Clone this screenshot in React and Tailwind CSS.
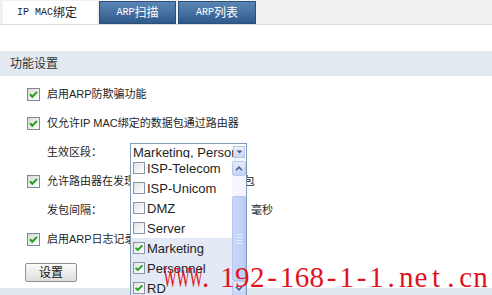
import React from "react";

const CB = ({ checked = true }) => (
  <svg width="13" height="13" viewBox="0 0 13 13" className="shrink-0 block">
    <defs>
      <linearGradient id="cbg" x1="0" y1="0" x2="1" y2="1">
        <stop offset="0" stopColor="#d8d8d2" />
        <stop offset="1" stopColor="#ffffff" />
      </linearGradient>
    </defs>
    <rect x="0.5" y="0.5" width="12" height="12" fill="url(#cbg)" stroke="#7c8a98" />
    {checked && (
      <path d="M3 6.3 L5.3 8.7 L10 3.9" fill="none" stroke="#21a121" strokeWidth="2" />
    )}
  </svg>
);

const SmallCB = ({ checked }) => (
  <svg width="12" height="12" viewBox="0 0 12 12" className="shrink-0 block">
    <defs>
      <linearGradient id="scbg" x1="0" y1="0" x2="1" y2="1">
        <stop offset="0" stopColor="#dfe2e6" />
        <stop offset="1" stopColor="#ffffff" />
      </linearGradient>
    </defs>
    <rect x="0.5" y="0.5" width="11" height="11" fill="url(#scbg)" stroke="#8796ab" />
    {checked && (
      <path d="M2.6 5.8 L4.8 8 L9.4 3.4" fill="none" stroke="#21a121" strokeWidth="1.9" />
    )}
  </svg>
);

const items = [
  ["ISP-Telecom", false],
  ["ISP-Unicom", false],
  ["DMZ", false],
  ["Server", false],
  ["Marketing", true],
  ["Personnel", true],
  ["RD", true],
];

const wm = [
  ["W", "w-[13px] scale-x-[0.5]"],
  ["W", "w-[13px] scale-x-[0.5]"],
  ["W", "w-[13px] scale-x-[0.5]"],
  [".", "w-[13px]"],
  ["\u00a0", "w-[8px]"],
  ..."192-168-1-1.net.cn".split("").map((c) => [c, "w-[14.9px]"]),
];

export default function App() {
  return (
    <div className="relative w-[492px] h-[295px] overflow-hidden bg-white text-[#1e1e1e] font-['Liberation_Sans','Noto_Sans_CJK_SC',sans-serif]">
      {/* tabs */}
      <div className="h-[25px] bg-[#f1f1f1] border-b border-[#dcdcdc] flex items-end pl-[3px] gap-[2px]">
        <div className="w-[94px] h-[23px] bg-white flex items-center justify-center pr-[6px] text-[#222]">
          <span className="font-['Liberation_Mono',monospace] text-[10px] whitespace-pre">IP MAC</span>
          <span className="text-[12px] leading-none">绑定</span>
        </div>
        <div className="w-[77px] h-[23px] bg-gradient-to-b from-[#5b85b4] to-[#2f5b8c] border border-[#2a4f7a] flex items-center justify-center text-white">
          <span className="font-['Liberation_Mono',monospace] text-[10px]">ARP</span>
          <span className="text-[12px] leading-none">扫描</span>
        </div>
        <div className="w-[78px] h-[23px] bg-gradient-to-b from-[#5b85b4] to-[#2f5b8c] border border-[#2a4f7a] flex items-center justify-center text-white">
          <span className="font-['Liberation_Mono',monospace] text-[10px]">ARP</span>
          <span className="text-[12px] leading-none">列表</span>
        </div>
      </div>

      <div className="h-[26px]" />

      {/* section header */}
      <div className="h-[25px] bg-[#e2e9f1] pl-[10px] flex items-center text-[12px] text-[#333]">
        功能设置
      </div>

      {/* form */}
      <div className="pt-[4px] text-[11px]">
        <div className="h-[29px] flex items-center pl-[27px] gap-[7px]">
          <CB />
          <span>启用ARP防欺骗功能</span>
        </div>
        <div className="h-[29px] flex items-center pl-[27px] gap-[7px]">
          <CB />
          <span>仅允许IP MAC绑定的数据包通过路由器</span>
        </div>
        <div className="h-[29px] flex items-center pl-[47px]">
          <span className="w-[83px]">生效区段：</span>
          <div className="relative self-start mt-[5px] w-[117px] h-[18px] border border-[#7f9db9] bg-white flex items-center">
            <span className="flex-1 overflow-hidden whitespace-nowrap pl-[2px] text-[13px] leading-none">
              Marketing, Personnel, RD
            </span>
            <div className="w-[12px] h-[12px] mr-[1px] border border-[#b3c4e6] bg-gradient-to-b from-[#eef3fd] to-[#c6d5f3] flex items-center justify-center">
              <svg width="7" height="4" viewBox="0 0 7 4">
                <path d="M0.5 0.5 L6.5 0.5 L3.5 3.5 Z" fill="#4a5d80" />
              </svg>
            </div>

            {/* dropdown list */}
            <div className="absolute left-[-1px] top-[14px] w-[117px] h-[150px] bg-white border-l border-r border-[#7f9db9] flex z-10">
              <div className="flex-1 flex flex-col">
                {items.map(([name, sel]) => (
                  <div
                    key={name}
                    className={
                      sel
                        ? "h-[20px] flex items-center pl-[2px] gap-[2px] bg-[#e3eaf6] text-[13px]"
                        : "h-[20px] flex items-center pl-[2px] gap-[2px] text-[13px]"
                    }
                  >
                    <SmallCB checked={sel} />
                    <span className="leading-none">{name}</span>
                  </div>
                ))}
              </div>
              <div className="w-[14px] flex flex-col pt-[3px] bg-[#f4f6fb]">
                <div className="h-[15px] rounded-[2px] border border-[#b7c9ee] bg-gradient-to-b from-[#e6eefd] to-[#c4d4f7] flex items-center justify-center">
                  <svg width="8" height="5" viewBox="0 0 8 5">
                    <path d="M1 4.2 L4 1.2 L7 4.2" fill="none" stroke="#4d6185" strokeWidth="1.6" />
                  </svg>
                </div>
                <div className="h-[20px]" />
                <div className="h-[85px] rounded-[2px] border border-[#b5c7ef] bg-gradient-to-r from-[#c9d8fb] to-[#bccdf5] flex flex-col items-center justify-center gap-[2px]">
                  <div className="w-[6px] h-px bg-[#e4ecfd]" />
                  <div className="w-[6px] h-px bg-[#e4ecfd]" />
                  <div className="w-[6px] h-px bg-[#e4ecfd]" />
                  <div className="w-[6px] h-px bg-[#e4ecfd]" />
                </div>
                <div className="h-[15px] rounded-[2px] border border-[#b7c9ee] bg-gradient-to-b from-[#e6eefd] to-[#c4d4f7] flex items-center justify-center">
                  <svg width="8" height="5" viewBox="0 0 8 5">
                    <path d="M1 0.8 L4 3.8 L7 0.8" fill="none" stroke="#4d6185" strokeWidth="1.6" />
                  </svg>
                </div>
              </div>
            </div>
          </div>
        </div>
        <div className="h-[29px] flex items-center pl-[27px] gap-[7px] whitespace-nowrap">
          <CB />
          <span>允许路由器在发现ARP攻击时发送GARP包</span>
        </div>
        <div className="h-[29px] flex items-center pl-[47px]">
          <span className="w-[83px]">发包间隔：</span>
          <div className="w-[116px] h-[18px] border border-[#7f9db9]" />
          <span className="ml-[5px]">毫秒</span>
        </div>
        <div className="h-[29px] flex items-center pl-[27px] gap-[7px]">
          <CB />
          <span>启用ARP日志记录</span>
        </div>
        <div className="pl-[25px] pt-[9px]">
          <div className="w-[52px] h-[19px] border border-[#8e9193] rounded-[2px] bg-gradient-to-b from-[#fbfbfb] to-[#dedede] flex items-center justify-center text-[12px] text-[#111]">
            设置
          </div>
        </div>
        <div className="mt-[6px] h-[12px] bg-[#dfe6ee]" />
      </div>

      {/* watermark */}
      <div className="absolute left-[160px] top-[263px] z-20 flex text-[29px] leading-[29px] text-[#e0131c] font-['Liberation_Serif',serif] whitespace-nowrap">
        {wm.map(([c, cls], i) => (
          <span key={i} className={"inline-block text-center " + cls}>
            {c}
          </span>
        ))}
      </div>
    </div>
  );
}
